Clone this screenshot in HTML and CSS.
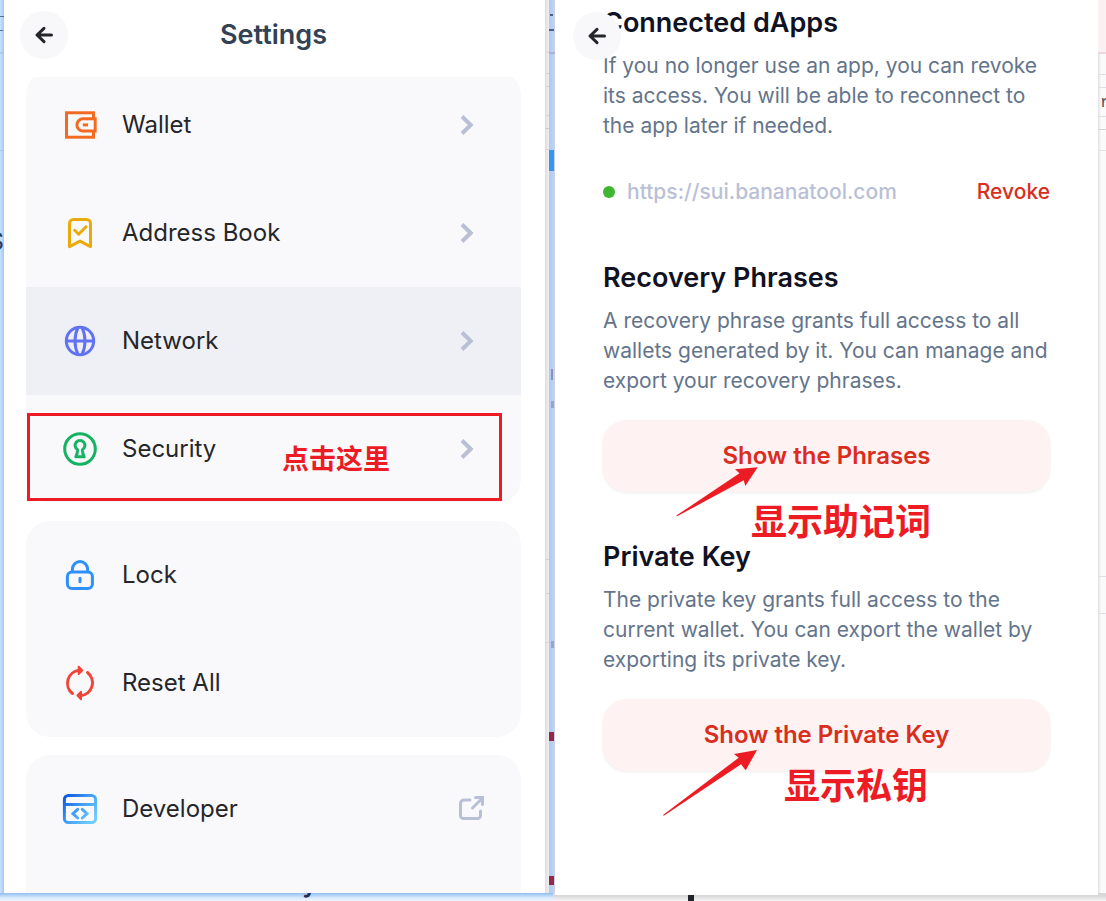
FILE: index.html
```html
<!DOCTYPE html>
<html lang="en">
<head>
<meta charset="utf-8">
<meta name="viewport" content="width=device-width, initial-scale=1">
<title>Settings</title>
<link rel="stylesheet" href="styles.css">
</head>
<body>
<div class="stage">
  <div class="edge edge-left" aria-hidden="true"><span class="edge-letter">S</span></div>

  <main class="panel settings">
    <header class="settings-header">
      <button class="back" type="button" aria-label="Back">
        <svg width="24" height="24" viewBox="0 0 24 24"><path d="M19.5 12H5M12 5.3 5 12l7 6.7"/></svg>
      </button>
      <h1 class="settings-title">Settings</h1>
    </header>
    <div class="scroller">
      <nav class="cards">
        <div class="card">
          <button class="row" type="button">
            <svg class="icon wallet" viewBox="0 0 36 36"><rect x="4.5" y="5.8" width="27" height="24.4"/><path class="clasp" d="M33.2 11.8H21a6.1 6.1 0 0 0 0 12.2h12.2Z"/><path d="M20.8 17.9H26"/></svg>
            <span class="label">Wallet</span>
            <svg class="icon chevron" viewBox="0 0 36 36"><path d="M9 9.5 17.7 18 9 26.5"/></svg>
          </button>
          <button class="row" type="button">
            <svg class="icon book" viewBox="0 0 36 36"><path d="M7.5 31.6V8.5a4 4 0 0 1 4-4h13a4 4 0 0 1 4 4v23.1L18 26.2Z"/><path d="m12.7 15.3 4 3.9 7.3-7.4"/></svg>
            <span class="label">Address Book</span>
            <svg class="icon chevron" viewBox="0 0 36 36"><path d="M9 9.5 17.7 18 9 26.5"/></svg>
          </button>
          <button class="row row-active" type="button">
            <svg class="icon globe" viewBox="0 0 36 36"><circle cx="18" cy="18" r="13.7"/><path d="M4.3 18h27.4M16 4.5c-4 8-4 19 0 27M20 4.5c4 8 4 19 0 27"/></svg>
            <span class="label">Network</span>
            <svg class="icon chevron" viewBox="0 0 36 36"><path d="M9 9.5 17.7 18 9 26.5"/></svg>
          </button>
          <div class="marked">
            <button class="row" type="button">
              <svg class="icon security" viewBox="0 0 36 36"><circle cx="18" cy="18" r="15.3"/><path d="M15.6 18.7a4.9 4.9 0 1 1 4.8 0c0 2.5.6 4.6 1.8 7.1h-8.4c1.2-2.5 1.8-4.6 1.8-7.1Z"/></svg>
              <span class="label">Security</span>
              <svg class="icon chevron" viewBox="0 0 36 36"><path d="M9 9.5 17.7 18 9 26.5"/></svg>
            </button>
            <div class="mark-frame"></div>
            <span class="note note-click" lang="zh">点击这里</span>
          </div>
        </div>
        <div class="card">
          <button class="row" type="button">
            <svg class="icon lock" viewBox="0 0 36 36"><rect x="5.4" y="15.1" width="25" height="16.5" rx="4.5"/><path d="M10.4 15v-2.8a7.6 7.6 0 0 1 15.2 0V15"/><path class="keyhole" d="M18 21.300v3.400"/></svg>
            <span class="label">Lock</span>
          </button>
          <button class="row" type="button">
            <svg class="icon reset" viewBox="0 0 36 36"><path d="M10.5 28.5A13 13 0 0 1 17.5 5.3M25.5 7.5A13 13 0 0 1 18.5 30.7"/><path class="head" d="m16.7 1.8 3.600 3.600-3.600 3.600zM19 26.800l-3.600 3.600 3.600 3.800z"/></svg>
            <span class="label">Reset All</span>
          </button>
        </div>
        <div class="card card-open">
          <button class="row" type="button">
            <svg class="icon developer" viewBox="0 0 36 36"><defs><linearGradient id="dev" gradientUnits="userSpaceOnUse" x1="2" y1="4" x2="30" y2="30"><stop offset="0" stop-color="#0754dc"/><stop offset=".5" stop-color="#3f9df5"/><stop offset="1" stop-color="#6fccff"/></linearGradient></defs><rect x="2.4" y="4.4" width="31.2" height="27.2" rx="4"/><path d="M2.4 13.4h31.2M15.7 18.3l-4.700 4.400 4.700 4.300M20.300 18.300l4.700 4.400-4.700 4.300"/></svg>
            <span class="label">Developer</span>
            <svg class="icon external" viewBox="0 0 36 36"><path d="M17 9h-6a3.500 3.500 0 0 0-3.500 3.500v12a3 3 0 0 0 3 3h14a3 3 0 0 0 3-3V20M19.500 17 29 7.500M22.500 6.500h7v7"/></svg>
          </button>
        </div>
      </nav>
    </div>
  </main>

  <div class="gutter" aria-hidden="true">
    <div class="gutter-gray"></div>
    <div class="gutter-blue"></div>
  </div>

  <section class="panel security-panel">
    <button class="back back-float" type="button" aria-label="Back">
      <svg width="24" height="24" viewBox="0 0 24 24"><path d="M19.5 12H5M12 5.3 5 12l7 6.7"/></svg>
    </button>
    <section class="block">
      <h2 class="heading">Connected dApps</h2>
      <p class="text">If you no longer use an app, you can revoke its access. You will be able to reconnect to the app later if needed.</p>
      <div class="dapp">
        <span class="dot"></span>
        <span class="site">https://sui.bananatool.com</span>
        <button class="revoke" type="button">Revoke</button>
      </div>
    </section>
    <section class="block">
      <h2 class="heading">Recovery Phrases</h2>
      <p class="text">A recovery phrase grants full access to all wallets generated by it. You can manage and export your recovery phrases.</p>
      <div class="action">
        <button class="danger" type="button">Show the Phrases</button>
        <svg class="arrow arrow-phrases" width="84" height="52" viewBox="675 466 84 52"><path d="M757.7 467.3 735 469.3l4.5 4L676.3 515.6l.8.7 66.6-36 1.6 5.7Z"/></svg>
        <span class="note note-large note-phrases" lang="zh">显示助记词</span>
      </div>
    </section>
    <section class="block">
      <h2 class="heading">Private Key</h2>
      <p class="text">The private key grants full access to the current wallet. You can export the wallet by exporting its private key.</p>
      <div class="action">
        <button class="danger" type="button">Show the Private Key</button>
        <svg class="arrow arrow-key" width="96" height="68" viewBox="662 749 96 68"><path d="m757 750-23 4 4.7 3.7L663 815l.8.8L741 764.3l4.7 6Z"/></svg>
        <span class="note note-large note-key" lang="zh">显示私钥</span>
      </div>
    </section>
  </section>

  <div class="edge edge-right" aria-hidden="true"><span class="edge-code">r</span></div>
  <div class="underlay" aria-hidden="true"><span class="underlay-letter">y</span><span class="underlay-bar"></span></div>
</div>
</body>
</html>
```
FILE: styles.css
```css
* { box-sizing: border-box; }

body {
  margin: 0;
  font-family: Inter, "Noto Sans CJK SC", sans-serif;
  background: #fafafb;
}

button {
  border: 0;
  padding: 0;
  background: none;
  font: inherit;
  color: inherit;
  text-align: left;
  cursor: pointer;
}

h1, h2, p { margin: 0; }

svg { display: block; fill: none; }

.stage {
  display: grid;
  grid-template-columns: 4px minmax(0, 541fr) 10px minmax(0, 543fr) 8px;
  grid-template-rows: minmax(0, 1fr) 8px;
  height: 100vh;
  overflow: hidden;
}

.panel { position: relative; background: #fff; }

/* Slivers of the page behind the two panels */
.edge { position: relative; overflow: hidden; }

.edge-left {
  background:
    linear-gradient(#b4c4ec, #b4c4ec) 0 52px / 100% 2px no-repeat,
    linear-gradient(#a9c4ee, #a9c4ee) 0 150px / 100% 1px no-repeat,
    linear-gradient(#5b6c98, #5b6c98) 0 16px / 100% 1px no-repeat,
    linear-gradient(#5b6c98, #5b6c98) 0 30px / 3px 1px no-repeat,
    linear-gradient(90deg, #c9e1fd, #a3c9f5);
}

.edge-letter {
  position: absolute;
  right: 0;
  top: 226px;
  font-size: 24px;
  line-height: 32px;
  color: #26395e;
}

.edge-right {
  background:
    linear-gradient(#ead9e2, #ead9e2) 0 52px / 100% 2px no-repeat,
    linear-gradient(#dcdfe4, #dcdfe4) 0 74px / 100% 1px no-repeat,
    linear-gradient(#dcdfe4, #dcdfe4) 0 87px / 100% 1px no-repeat,
    linear-gradient(#dcdfe4, #dcdfe4) 0 116px / 100% 1px no-repeat,
    linear-gradient(#d5d5d8, #d5d5d8) 0 129px / 100% 1px no-repeat,
    linear-gradient(#e4e4e6, #e4e4e6) 0 150px / 100% 1px no-repeat,
    linear-gradient(#dcdfea, #dcdfea) 0 576px / 100% 1px no-repeat,
    linear-gradient(#dcdfea, #dcdfea) 0 613px / 100% 1px no-repeat,
    linear-gradient(#fbf0f2, #fbf0f2) 0 0 / 100% 52px no-repeat,
    linear-gradient(90deg, #e4dfe1, #fafafb 3px);
}

.edge-code {
  position: absolute;
  left: 2px;
  top: 93px;
  font: 16px/20px "Liberation Mono", monospace;
  color: #4a4f58;
}

.gutter { display: grid; grid-template-columns: 4px 6px; }

.gutter-gray {
  background:
    linear-gradient(#e5d9dc, #e5d9dc) 0 51px / 100% 2px no-repeat,
    linear-gradient(#d4d4d4, #d4d4d4) 0 73px / 100% 1px no-repeat,
    linear-gradient(#d4d4d4, #d4d4d4) 0 86px / 100% 1px no-repeat,
    linear-gradient(#d4d4d4, #d4d4d4) 0 115px / 100% 1px no-repeat,
    linear-gradient(#cccccc, #cccccc) 0 128px / 100% 1px no-repeat,
    linear-gradient(#d4d4d4, #d4d4d4) 0 149px / 100% 1px no-repeat,
    linear-gradient(#d4d4d4, #d4d4d4) 0 559px / 100% 1px no-repeat,
    linear-gradient(#d4d4d4, #d4d4d4) 0 593px / 100% 1px no-repeat,
    linear-gradient(#d4d4d4, #d4d4d4) 0 642px / 100% 1px no-repeat,
    linear-gradient(90deg, #dedddd, #f0f0f0);
}

.gutter-blue {
  background:
    linear-gradient(#4d5f82, #4d5f82) 0 29px / 5px 2px no-repeat,
    linear-gradient(#4d5f82, #4d5f82) 1px 14px / 3px 2px no-repeat,
    linear-gradient(#a9b2d6, #a9b2d6) 0 52px / 100% 2px no-repeat,
    linear-gradient(#3596ef, #3596ef) 0 150px / 5px 21px no-repeat,
    linear-gradient(#8c92bd, #8c92bd) 2px 369px / 2px 11px no-repeat,
    linear-gradient(#9aa4cb, #9aa4cb) 2px 401px / 3px 7px no-repeat,
    linear-gradient(#9aa4cb, #9aa4cb) 2px 641px / 3px 7px no-repeat,
    linear-gradient(#94284a, #94284a) 0 732px / 5px 9px no-repeat,
    linear-gradient(#94284a, #94284a) 0 876px / 5px 9px no-repeat,
    linear-gradient(90deg, #a7cbf6, #ccd2ea);
}

.underlay {
  grid-column: 1 / -1;
  position: relative;
  overflow: hidden;
  background:
    linear-gradient(#8fbdf0, #dcecfe 5px, #edf5fe) 0 0 / 50% 100% no-repeat,
    linear-gradient(#d8d8da 3px, #f5f5f6);
}

.underlay-letter {
  position: absolute;
  left: 302px;
  bottom: 2px;
  font-size: 26px;
  line-height: 32px;
  font-weight: 600;
  color: #1e3152;
}

.underlay-bar {
  position: absolute;
  left: 688px;
  bottom: 0;
  width: 6px;
  height: 6px;
  background: #20242a;
}

/* Settings panel */
.settings {
  display: flex;
  flex-direction: column;
  overflow: hidden;
}

.settings-header {
  display: grid;
  grid-template-columns: 48px 1fr 48px;
  align-items: center;
  padding: 11px 18px 18px 16px;
}

.back {
  display: grid;
  place-items: center;
  width: 48px;
  height: 48px;
  border-radius: 50%;
  background: #f8f8fb;
}

.back path {
  stroke: #25262a;
  stroke-width: 3;
  stroke-linecap: round;
  stroke-linejoin: round;
}

.settings-title {
  font-size: 27px;
  line-height: 36px;
  font-weight: 600;
  text-align: center;
  color: #334155;
}

.scroller { flex: 1; min-height: 0; overflow: hidden; }

.cards {
  display: flex;
  flex-direction: column;
  gap: 18px;
  height: 100%;
  margin: -6px 24px 0 22px;
}

.card {
  flex: none;
  border-radius: 24px;
  background: #f9f9fc;
}

.card-open { flex: 1 0 150px; border-radius: 24px 24px 0 0; }

.row {
  display: flex;
  align-items: center;
  gap: 24px;
  width: 100%;
  height: 108px;
  padding: 0 32px 0 36px;
}

.row-active { background: #eff0f5; }

.label {
  flex: 1;
  font-size: 24px;
  line-height: 36px;
  color: #25262a;
}

.icon { flex: none; width: 36px; height: 36px; stroke-width: 3; }
.wallet { stroke: #f26b21; }
.clasp { fill: #f9f9fc; }
.book { stroke: #eaaa08; stroke-linejoin: round; stroke-linecap: round; }
.globe { stroke: #6172f3; }
.security { stroke: #16b364; stroke-linejoin: round; }
.lock { stroke: #2e90fa; }
.keyhole { stroke-linecap: round; }
.reset { stroke: #f04438; stroke-linecap: round; stroke-linejoin: round; }
.head { fill: #f04438; stroke-width: 2; }
.developer { stroke: url(#dev); stroke-linecap: round; }
.chevron { stroke: #b9c0d6; stroke-width: 4; }
.external { stroke: #b9c0d6; stroke-linecap: round; }

/* Red annotations */
.marked { position: relative; }

.mark-frame {
  position: absolute;
  inset: 18px 19px 2px 1px;
  border: 3px solid #ed1c24;
  pointer-events: none;
}

.note {
  position: absolute;
  font-family: "Noto Sans CJK SC", sans-serif;
  font-size: 27px;
  line-height: 36px;
  font-weight: 700;
  white-space: nowrap;
  color: #ed1c24;
  pointer-events: none;
}

.note-large { font-size: 36px; line-height: 48px; }
.note-click { left: 256px; top: 45px; }
.note-phrases { left: 148px; top: 75px; }
.note-key { left: 181px; top: 60px; }

.arrow { position: absolute; fill: #ed1c24; pointer-events: none; }
.arrow-phrases { left: 72px; top: 46px; }
.arrow-key { left: 59px; top: 50px; }

/* Security panel */
.security-panel {
  display: flex;
  flex-direction: column;
  gap: 47px;
  margin-bottom: -2px;
  padding: 5px 48px 0;
  z-index: 1;
}

.back-float { position: absolute; left: 18px; top: 12px; }

.heading {
  margin-bottom: 10px;
  font-size: 27px;
  line-height: 36px;
  font-weight: 600;
  color: #101223;
}

.text {
  font-size: 21px;
  line-height: 30px;
  color: #64748b;
}

.dapp {
  display: flex;
  align-items: center;
  padding: 36px 0 6px;
  font-size: 21px;
  line-height: 30px;
}

.dot {
  width: 12px;
  height: 12px;
  margin-right: 12px;
  border-radius: 50%;
  background: #3fb532;
}

.site { flex: 1; font-weight: 500; color: #b9c0d6; }
.revoke { font-weight: 500; color: #d92d20; }

.action { position: relative; margin-top: 24px; }

.danger {
  width: 100%;
  height: 72px;
  border-radius: 24px;
  background: #fef2f2;
  box-shadow: 0 1px 3px #10182814;
  font-size: 24px;
  line-height: 36px;
  font-weight: 600;
  text-align: center;
  color: #d92d20;
}
```
